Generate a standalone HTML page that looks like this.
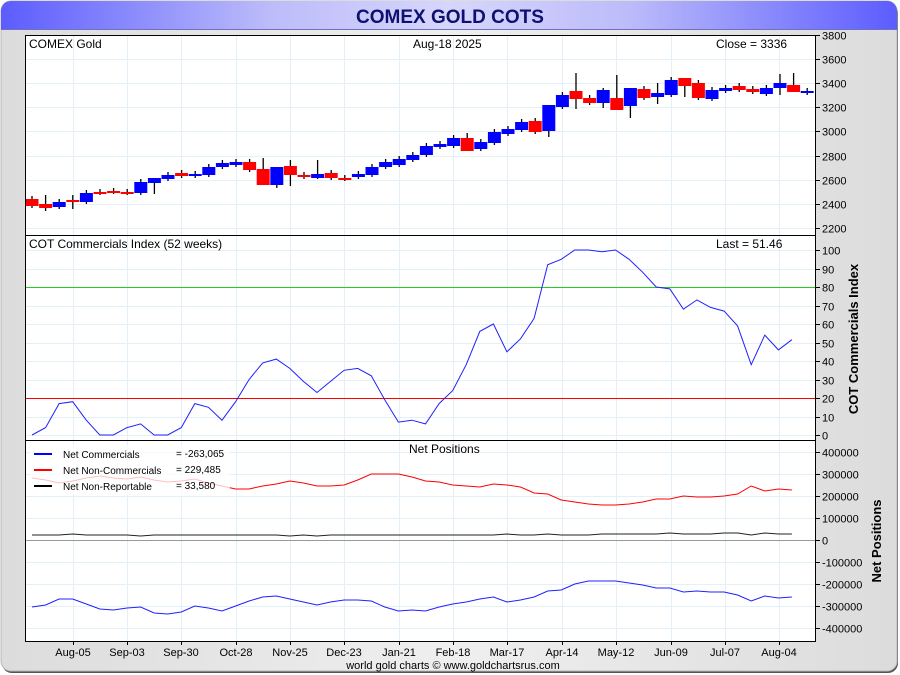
<!DOCTYPE html>
<html><head><meta charset="utf-8"><style>
html,body{margin:0;padding:0;background:#fff;width:900px;height:675px;overflow:hidden}
svg{display:block;font-family:"Liberation Sans",sans-serif}
</style></head><body>
<svg id="s" width="900" height="675" xmlns="http://www.w3.org/2000/svg">
<defs>
<linearGradient id="hg" x1="0" x2="1" y1="0" y2="0">
<stop offset="0" stop-color="#5c5cff"/><stop offset="0.3" stop-color="#bcbcfa"/><stop offset="0.5" stop-color="#d6d6fc"/><stop offset="0.7" stop-color="#bcbcfa"/><stop offset="1" stop-color="#5c5cff"/></linearGradient>
<linearGradient id="bg" x1="0" x2="1" y1="0" y2="0">
<stop offset="0" stop-color="#dcdcdc"/><stop offset="0.5" stop-color="#efefef"/><stop offset="1" stop-color="#dcdcdc"/></linearGradient>
</defs>
<rect x="2" y="3" width="896" height="670" rx="10" fill="#555"/>
<rect x="1" y="1" width="896" height="670" rx="10" fill="url(#bg)" stroke="#b8b8b8"/>
<path d="M11 1 H887 A10 10 0 0 1 897 11 V29 H1 V11 A10 10 0 0 1 11 1Z" fill="url(#hg)"/>
<line x1="1" y1="29.5" x2="897" y2="29.5" stroke="#7070c0"/>
<text x="450" y="23" text-anchor="middle" font-size="19" font-weight="bold" fill="#101070">COMEX GOLD COTS</text>
<rect x="25" y="35" width="790" height="606" fill="#fff"/>
<g id="g"></g>
<rect x="25.5" y="35.5" width="790" height="606" fill="none" stroke="#000"/>
<line x1="25" y1="235.5" x2="815" y2="235.5" stroke="#000"/>
<line x1="25" y1="440.5" x2="815" y2="440.5" stroke="#000"/>
<text x="29" y="48" font-size="12">COMEX Gold</text>
<text x="413" y="48" font-size="12">Aug-18  2025</text>
<text x="716" y="48" font-size="12">Close = 3336</text>
<text x="29" y="248" font-size="12">COT Commercials Index (52 weeks)</text>
<text x="716" y="248" font-size="12">Last = 51.46</text>
<text x="409" y="453" font-size="12">Net Positions</text>
<text transform="translate(858,339) rotate(-90)" text-anchor="middle" font-size="13" font-weight="bold">COT Commercials Index</text>
<text transform="translate(881,541) rotate(-90)" text-anchor="middle" font-size="13" font-weight="bold">Net Positions</text>
<text x="453" y="669" text-anchor="middle" font-size="11">world gold charts © www.goldchartsrus.com</text>
</svg>
<script>
var g=document.getElementById('g'),NS='http://www.w3.org/2000/svg',h='';
var dx=[73,127,181,236,290,344,399,453,507,562,616,671,725,779],dl=['Aug-05','Sep-03','Sep-30','Oct-28','Nov-25','Dec-23','Jan-21','Feb-18','Mar-17','Apr-14','May-12','Jun-09','Jul-07','Aug-04'];
dx.forEach(function(x,i){h+='<line x1="'+x+'.5" y1="35" x2="'+x+'.5" y2="641" stroke="#e3f0f8"/><line x1="'+x+'.5" y1="641" x2="'+x+'.5" y2="645" stroke="#000"/><text x="'+x+'" y="656" font-size="11" text-anchor="middle">'+dl[i]+'</text>';});
function hl(y,lab){h+='<line x1="25" y1="'+y+'" x2="815" y2="'+y+'" stroke="#e3f0f8"/><line x1="815" y1="'+y+'" x2="820" y2="'+y+'" stroke="#000"/><text x="822" y="'+(y+4)+'" font-size="11">'+lab+'</text>';}
for(var p=3800;p>=2200;p-=200)hl(Math.round(35+(3800-p)*0.1206)+.5,p);
for(var v=100;v>=0;v-=10)hl(Math.round(250+(100-v)*1.85)+.5,v);
for(var n=400000;n>=-400000;n-=100000)hl(Math.round(540-n*0.000219)+.5,n);
h+='<line x1="25" y1="287.5" x2="815" y2="287.5" stroke="#20d020"/><line x1="25" y1="398.5" x2="815" y2="398.5" stroke="#f00"/><line x1="25" y1="540.5" x2="815" y2="540.5" stroke="#999"/>';
var C=[['r',199,206],['r',204,208],['b',202,207],['r',200,201],['b',193,202],['r',192,193],['r',191,192],['r',192,193],['b',182,193],['b',178,183],['b',175,179],['r',173,176],['b',174,176],['b',167,175],['b',163,167],['b',162,165],['r',162,170],['r',169,185],['b',167,185],['r',166,175],['r',175,177],['b',174,178],['r',173,178],['r',178,179],['b',174,177],['b',167,175],['b',162,167],['b',159,165],['b',155,160],['b',146,155],['b',144,147],['b',138,146],['r',138,151],['b',142,149],['b',132,143],['b',129,134],['b',122,130],['r',121,132],['b',105,131],['b',95,107],['r',91,99],['r',98,103],['b',90,103],['r',98,110],['b',88,106],['r',89,98],['b',93,97],['b',80,95],['r',78,86],['r',83,98],['b',90,99],['b',88,91],['r',86,90],['r',89,92],['b',88,94],['b',83,88],['r',85,92],['b',91,93]];
var W={1:[195,211],3:[195,209],9:[180,194],17:[158,175],18:[167,188],19:[160,186],21:[160,179],32:[133,148],38:[113,137],40:[73,109],42:[88,108],43:[75,105],44:[95,118],46:[83,104],48:[78,97],55:[74,95],56:[73,91]};
C.forEach(function(c,i){var x=32+i*13.6,col=c[0]=='r'?'#f00':'#00f',w=W[i]||[c[1]-3,c[2]+2];
h+='<line x1="'+x+'" y1="'+w[0]+'" x2="'+x+'" y2="'+w[1]+'" stroke="#000" stroke-width="1.3"/>';
h+='<rect x="'+(x-6.5)+'" y="'+c[1]+'" width="13" height="'+Math.max(2,c[2]-c[1])+'" fill="'+col+'"/>';});
function line(arr,f,col){var s='';arr.forEach(function(v,i){s+=(i?'L':'M')+(32+i*13.57).toFixed(1)+' '+f(v).toFixed(1)});h+='<path d="'+s+'" fill="none" stroke="'+col+'" stroke-width="1"/>';}
var cot=[0,4,17,18,8,0,0,4,6,0,0,4,17,15,8,18,30,39,41,36,29,23,29,35,36,32,19,7,8,6,17,24,38,56,60,45,52,63,92,95,100,100,99,100,95,88,80,79,68,73,69,67,59,38,54,46,51.5];
line(cot,function(v){return 250+(100-v)*1.85},'#2020ff');
var blue=[607,605,599,599,604,609,610,608,607,613,614,612,606,608,611,606,601,597,596,599,602,605,602,600,600,601,607,611,610,611,607,604,602,599,597,602,600,597,591,590,584,581,581,581,583,585,588,588,592,591,592,592,595,601,596,598,597];
var red=[478,480,483,481,478,476,478,479,477,480,482,481,479,483,486,489,489,486,484,481,483,486,486,485,480,474,474,474,477,481,482,485,486,487,484,485,487,493,494,500,502,504,505,505,504,502,499,499,496,497,497,496,494,486,491,489,490];
var blk=[535,535,535,534,535,535,535,535,536,535,535,535,535,535,535,535,535,535,535,536,535,536,535,535,535,535,535,535,535,535,535,535,535,535,535,534,535,535,534,535,535,535,534,534,534,534,534,533,534,534,534,533,533,535,533,534,534];
line(red,function(v){return v},'#f00');line(blk,function(v){return v},'#222');line(blue,function(v){return v},'#2020ff');
h+='<rect x="30" y="445" width="200" height="50" fill="#fff" opacity="0.75"/>';
[['#00f','Net Commercials','= -263,065'],['#f00','Net Non-Commercials','= 229,485'],['#000','Net Non-Reportable','= 33,580']].forEach(function(r,i){var y=454+i*16;
h+='<line x1="34" y1="'+y+'" x2="52" y2="'+y+'" stroke="'+r[0]+'" stroke-width="2"/><text x="63" y="'+(y+4)+'" font-size="10">'+r[1]+'</text><text x="176" y="'+(y+3)+'" font-size="10">'+r[2]+'</text>';});
g.innerHTML=h;
</script>
</body></html>
